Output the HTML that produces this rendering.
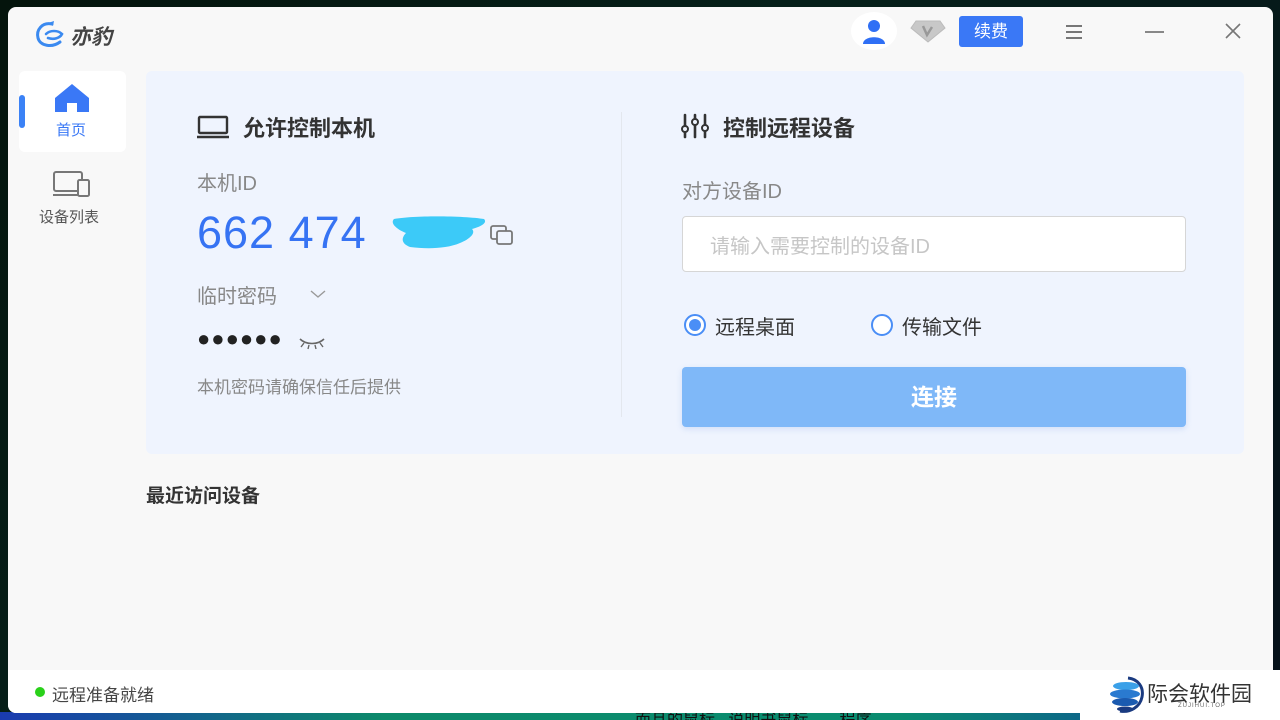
<!DOCTYPE html>
<html><head><meta charset="utf-8"><style>
*{margin:0;padding:0;box-sizing:border-box}
html,body{width:1280px;height:720px;overflow:hidden}
body{background:linear-gradient(135deg,#04140c 0%,#06201a 40%,#05101a 100%);font-family:"Liberation Sans","Noto Sans CJK SC",sans-serif;position:relative}
.bgb{position:absolute;left:0;right:0;bottom:0;height:8px;background:linear-gradient(90deg,#1a3bb0,#0c8a6a 30%,#0a8c70 70%,#1040a0)}
.win{position:absolute;left:8px;top:7px;width:1265px;height:706px;background:#f8f8f8;border-radius:8px;overflow:hidden}
.abs{position:absolute}
.t{position:absolute;white-space:nowrap}
</style></head><body>
<div class="bgb"></div>
<div class="t" style="left:635px;top:706px;color:#111;font-size:16px">而且的鼠标 &nbsp; 说明书鼠标 &nbsp; &nbsp; &nbsp; 程序</div>
<div class="win">
  <svg class="abs" style="left:26px;top:13px" width="32" height="30" viewBox="0 0 32 30"><path d="M18 4 C8 2 2 10 4 18 C6 26 18 28 26 22" fill="none" stroke="#3b8af0" stroke-width="3" stroke-linecap="round"/><path d="M12 14 C16 10 24 10 28 14 C26 18 20 20 14 18" fill="none" stroke="#3b8af0" stroke-width="2.6" stroke-linecap="round"/><path d="M14 3 L20 1 L19 6" fill="#3b8af0"/></svg>
  <div class="t" style="left:62px;top:14px;font-size:21px;font-style:italic;font-weight:bold;color:#444">亦豹</div>
  <div class="abs" style="left:843px;top:5px;width:46px;height:38px;border-radius:50%;background:#fff"></div>
  <svg class="abs" style="left:852px;top:10px" width="28" height="28" viewBox="0 0 28 28"><circle cx="14" cy="9" r="6" fill="#2f6ff5"/><path d="M3 27 C3 18 25 18 25 27Z" fill="#2f6ff5"/></svg>
  <svg class="abs" style="left:902px;top:12px" width="36" height="24" viewBox="0 0 36 24"><path d="M6 2 H30 L35 9 L18 23 L1 9Z" fill="#c8c8c8" stroke="#bbb"/><path d="M13 7 L17 16 L22 8" fill="none" stroke="#999" stroke-width="2.5"/></svg>
  <div class="t" style="left:951px;top:9px;width:64px;height:31px;background:#3a78f6;border-radius:3px;color:#fff;font-size:17px;line-height:31px;text-align:center">续费</div>
  <div class="abs" style="left:1058px;top:18px;width:16px;height:2px;background:#777;box-shadow:0 6px 0 #777,0 12px 0 #777"></div>
  <div class="abs" style="left:1137px;top:24px;width:19px;height:1.5px;background:#888"></div>
  <svg class="abs" style="left:1216px;top:15px" width="18" height="18" viewBox="0 0 18 18"><path d="M2 2 L16 16 M16 2 L2 16" stroke="#777" stroke-width="1.6"/></svg>
  <div class="abs" style="left:11px;top:64px;width:107px;height:81px;background:#fff;border-radius:6px"></div>
  <div class="abs" style="left:11px;top:88px;width:6px;height:33px;background:#3b82f6;border-radius:3px"></div>
  <svg class="abs" style="left:46px;top:76px" width="36" height="30" viewBox="0 0 36 30"><path d="M18 1 L35 15 V29 H23 V20 H13 V29 H1 V15Z" fill="#3a78f6"/></svg>
  <div class="t" style="left:48px;top:112px;font-size:15px;color:#3a78f6">首页</div>
  <svg class="abs" style="left:44px;top:163px" width="40" height="28" viewBox="0 0 40 28"><rect x="2" y="2" width="28" height="19" rx="2" fill="none" stroke="#777" stroke-width="2"/><path d="M1 25 H28" stroke="#777" stroke-width="2"/><rect x="26" y="10" width="11" height="16" rx="1.5" fill="#f8f8f8" stroke="#777" stroke-width="2"/></svg>
  <div class="t" style="left:31px;top:199px;font-size:15px;color:#555">设备列表</div>
  <div class="abs" style="left:138px;top:64px;width:1098px;height:383px;background:#eff4fe;border-radius:6px"></div>
  <div class="abs" style="left:613px;top:105px;width:1px;height:305px;background:#e3e7ee"></div>
  <svg class="abs" style="left:188px;top:108px" width="36" height="24" viewBox="0 0 36 24"><rect x="3" y="2" width="28" height="16" rx="1" fill="none" stroke="#333" stroke-width="2.4"/><path d="M1 22 H33" stroke="#333" stroke-width="2.4"/></svg>
  <div class="t" style="left:235px;top:104px;font-size:22px;font-weight:bold;color:#333">允许控制本机</div>
  <div class="t" style="left:189px;top:160px;font-size:20px;color:#888">本机ID</div>
  <div class="t" style="left:189px;top:200px;font-size:45px;color:#3673f3;letter-spacing:1px">662 474</div>
  <svg class="abs" style="left:378px;top:206px" width="104" height="40" viewBox="0 0 104 40"><path d="M8 6 C30 2 80 3 98 6 C102 10 94 14 86 16 C90 20 84 26 74 30 C60 36 40 36 24 34 C14 30 16 24 20 20 C10 16 4 10 8 6Z" fill="#3ccaf8"/></svg>
  <svg class="abs" style="left:481px;top:217px" width="26" height="22" viewBox="0 0 26 22"><rect x="2" y="2" width="15" height="13" rx="2" fill="none" stroke="#777" stroke-width="1.8"/><rect x="8" y="7" width="15" height="13" rx="2" fill="#eff4fe" stroke="#777" stroke-width="1.8"/></svg>
  <div class="t" style="left:189px;top:273px;font-size:20px;color:#888">临时密码</div>
  <svg class="abs" style="left:302px;top:281px" width="16" height="12" viewBox="0 0 16 12"><path d="M1 3 L8 9 L15 3" fill="none" stroke="#999" stroke-width="1.4"/></svg>
  <div class="t" style="left:189px;top:319px;font-size:22px;color:#222;letter-spacing:1px">●●●●●●</div>
  <svg class="abs" style="left:290px;top:328px" width="28" height="16" viewBox="0 0 28 16"><path d="M2 4 C8 10 20 10 26 4" fill="none" stroke="#666" stroke-width="1.6"/><path d="M6 8 L3 12 M11 10 L10 14 M17 10 L18 14 M22 8 L25 12" stroke="#666" stroke-width="1.4"/></svg>
  <div class="t" style="left:189px;top:366px;font-size:17px;color:#888">本机密码请确保信任后提供</div>
  <svg class="abs" style="left:673px;top:106px" width="30" height="26" viewBox="0 0 30 26"><g stroke="#333" stroke-width="2.6" stroke-linecap="round"><path d="M4 2V24M14 2V24M24 2V24"/></g><g fill="#eff4fe" stroke="#333" stroke-width="2"><circle cx="4" cy="16" r="3"/><circle cx="14" cy="9" r="3"/><circle cx="24" cy="15" r="3"/></g></svg>
  <div class="t" style="left:715px;top:104px;font-size:22px;font-weight:bold;color:#333">控制远程设备</div>
  <div class="t" style="left:674px;top:168px;font-size:20px;color:#888">对方设备ID</div>
  <div class="abs" style="left:674px;top:209px;width:504px;height:56px;background:#fff;border:1.5px solid #d6d6d6;border-radius:4px"></div>
  <div class="t" style="left:702px;top:223px;font-size:20px;color:#c6c6c6">请输入需要控制的设备ID</div>
  <div class="abs" style="left:676px;top:307px;width:22px;height:22px;border-radius:50%;border:2px solid #4a8ef6;background:#fff"></div>
  <div class="abs" style="left:681px;top:312px;width:12px;height:12px;border-radius:50%;background:#4a8ef6"></div>
  <div class="t" style="left:707px;top:304px;font-size:20px;color:#333">远程桌面</div>
  <div class="abs" style="left:863px;top:307px;width:22px;height:22px;border-radius:50%;border:2px solid #4a8ef6;background:#fff"></div>
  <div class="t" style="left:894px;top:304px;font-size:20px;color:#333">传输文件</div>
  <div class="abs" style="left:674px;top:360px;width:504px;height:60px;background:#7fb8f8;border-radius:4px;box-shadow:0 2px 6px rgba(120,160,230,.25);color:#fff;font-size:23px;font-weight:bold;line-height:60px;text-align:center">连接</div>
  <div class="t" style="left:138px;top:474px;font-size:19px;font-weight:bold;color:#333">最近访问设备</div>
  <div class="abs" style="left:0;top:663px;width:1265px;height:43px;background:#fff"></div>
  <div class="abs" style="left:27px;top:680px;width:10px;height:10px;border-radius:50%;background:#2ad11a"></div>
  <div class="t" style="left:44px;top:674px;font-size:17px;color:#444">远程准备就绪</div>
</div>
<div class="abs" style="left:1080px;top:670px;width:200px;height:50px;background:#fff"></div>
<svg class="abs" style="left:1108px;top:675px" width="38" height="40" viewBox="0 0 38 40"><path d="M20 3 C30 4 36 12 34 22 C32 32 22 38 12 36" fill="none" stroke="#1a3a80" stroke-width="3"/><ellipse cx="18" cy="11" rx="13" ry="4" fill="#3aa0e8"/><ellipse cx="17" cy="19" rx="15" ry="4.5" fill="#2a7ad0"/><ellipse cx="17" cy="27" rx="13" ry="4" fill="#1a5ab0"/><ellipse cx="17" cy="34" rx="8" ry="2.5" fill="#1a3a80"/></svg>
<div class="t" style="left:1147px;top:678px;font-size:21px;color:#333">际会软件园</div>
<div class="t" style="left:1178px;top:703px;font-size:6px;color:#666;letter-spacing:1px">ZUJIHUI.TOP</div>
</body></html>
